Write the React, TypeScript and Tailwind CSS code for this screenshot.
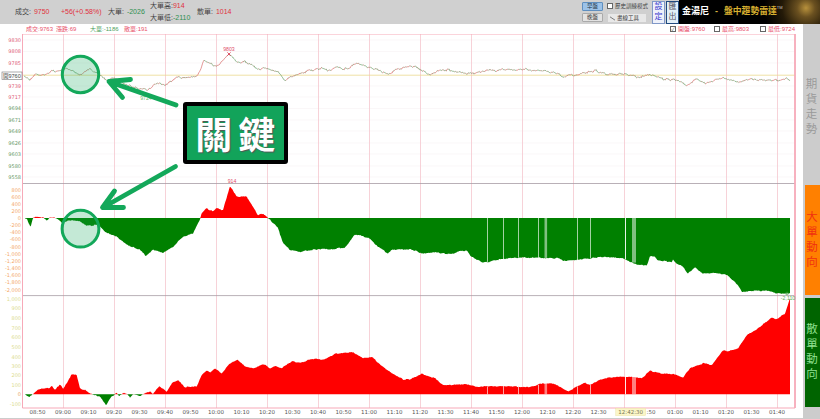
type Pt = [number, number];

const pricePts: Pt[] = [
  [24, 76], [30, 80], [35, 74], [40, 76], [45, 74], [52, 70.7], [60, 70.7], [65, 68.3], [72, 70.7], [80, 75], [90, 69], [95, 72.7],
  [102, 76.7], [107, 80], [113, 78], [133, 86.7], [147, 90], [157, 83], [165, 86], [177, 76.7], [187, 78], [197, 76.7], [200, 71.7],
  [203, 61], [208, 63], [217, 66.7], [222, 61.7], [229, 54], [237, 63], [245, 61.7], [260, 70], [263, 68], [278, 71.7], [285, 80],
  [300, 72.7], [315, 70], [320, 68], [328, 70.7], [337, 66.7], [347, 69.3], [357, 63.3], [368, 66.7], [380, 70], [388, 75], [395, 70],
  [410, 65.7], [418, 68], [428, 74], [433, 74], [440, 69.3], [453, 70.7], [472, 74], [482, 70.7], [500, 70], [522, 69.3], [543, 70.7],
  [557, 72.7], [563, 76.7], [580, 74], [597, 70.7], [607, 74.7], [627, 74], [638, 77], [653, 74.7], [663, 79], [677, 80], [687, 85.7],
  [697, 79], [705, 83], [722, 78], [740, 82], [752, 79], [775, 80.7], [787, 78], [790, 82],
];

const bigPts: Pt[] = [
  [25, 218], [27, 219], [30.7, 227], [33, 218], [36.7, 216.7], [43, 217.5], [46.7, 220.7], [50, 218], [55, 218], [61.7, 222.3], [71.7, 220],
  [80, 221.7], [86.7, 226], [98, 225], [106.7, 233], [116.7, 236.7], [126.7, 245], [140, 250], [145.7, 256], [153, 250], [163, 253],
  [173, 246.7], [183, 236.7], [193, 233], [200, 220], [201.7, 213], [206.7, 208.3], [213, 211.7], [216.7, 208], [223, 210], [230, 186],
  [233, 190], [236.7, 196.7], [246.7, 196.7], [253, 206.7], [258, 215], [263, 213.3], [267, 217.3], [270, 219.3], [278, 228.3], [283, 243],
  [290, 250], [300, 251.7], [318, 249], [333, 249], [345, 247.3], [355, 234.3], [370, 238.3], [378, 246.7], [388, 253.3], [392, 250],
  [410, 249], [422, 253.3], [437, 252.3], [450, 254], [467, 250], [471, 256.7], [483, 262.7], [500, 259.3], [520, 257.3], [560, 258.3],
  [563, 261], [583, 259.3], [597, 257.3], [600, 256.7], [623, 258.3], [637, 265], [647, 265], [650, 256], [655, 256.7], [658, 260.7],
  [672, 261.7], [673, 259.3], [677, 264], [683, 266.7], [688, 274], [695, 266.7], [703, 274], [713, 272.7], [727, 275], [738, 285],
  [742, 292.3], [757, 290.7], [767, 290.7], [777, 293.3], [790, 293.3],
];

const smallPts: Pt[] = [
  [25, 394], [29.3, 397.3], [33, 394], [38, 389.3], [45, 388], [50, 388.5], [51.7, 385.7], [55, 390], [60, 384], [63, 389.3], [66.7, 383.3],
  [71.7, 374], [76.7, 375], [80, 388.3], [85, 390], [90, 393.3], [93, 395], [100, 396.7], [106, 405], [111.7, 396], [115, 394.3], [116.7, 392.7],
  [119, 396], [123, 392.7], [126.7, 394.3], [130, 397.3], [133, 394.3], [140, 396], [143, 394.3], [150, 391], [153, 394], [159.3, 386],
  [166.7, 391.7], [171.7, 383.3], [178.3, 380], [185, 387.3], [196.7, 386], [201.7, 375], [206.7, 370], [210, 373], [215, 368.3], [221.7, 373.3],
  [228.3, 365], [237.3, 359.3], [245, 366.7], [253.3, 368.3], [263.3, 364], [270, 368.3], [275, 365.7], [281.7, 368.3], [291.7, 361], [300, 362.7],
  [315, 358.3], [323, 360], [336.7, 353.3], [353, 352.3], [363, 358.3], [371.7, 356.7], [386.7, 370], [403, 379.3], [410, 379.3], [421.7, 374],
  [435, 378.3], [443, 385], [466.7, 384.3], [476.7, 386.7], [500, 386], [523, 386.7], [530, 387.3], [543, 383.3], [551.7, 383.3], [560, 386.7],
  [568.3, 391.7], [576.7, 386.7], [585, 382.7], [590, 385], [600, 380], [610, 377.3], [633, 376.7], [641.7, 378.3], [650, 370.7], [660, 373.3],
  [673, 374], [683, 377.3], [690, 368.3], [703, 363.3], [711.7, 365], [723, 350], [727, 351.5], [738, 348.3], [746.7, 335], [756.7, 329.3],
  [771.7, 317.3], [776.7, 319], [785, 313.3], [790, 298.3],
];

const slits: [number, number, number][] = [
  [487, 0.8, 0.8], [503, 0.8, 0.8], [518, 0.8, 0.8], [538, 0.8, 0.8], [544.5, 2.6, 0.5], [577, 0.8, 0.8], [590, 0.8, 0.8], [625, 1, 0.9], [632, 4, 0.5],
];

const priceAxis: [string, number, string][] = [
  ["9830", 40, "#e0607a"], ["9808", 51.5, "#e0607a"], ["9785", 63, "#e0607a"], ["9739", 86, "#e0607a"], ["9717", 97, "#e0607a"],
  ["9694", 108.5, "#6a9a6a"], ["9671", 120, "#6a9a6a"], ["9649", 131, "#6a9a6a"], ["9626", 143, "#6a9a6a"], ["9603", 154, "#6a9a6a"],
  ["9580", 166, "#6a9a6a"], ["9558", 177, "#6a9a6a"],
];
const bigAxis: [string, number][] = [
  ["800", 190], ["600", 197], ["400", 204], ["200", 211], ["0", 218], ["-200", 225], ["-400", 232], ["-600", 239.5], ["-800", 246.7],
  ["-1,000", 254], ["-1,200", 261], ["-1,400", 268.3], ["-1,600", 275.3], ["-1,800", 282.3], ["-2,000", 289.7],
];
const smallAxis: [string, number][] = [
  ["1,000", 299], ["900", 308.3], ["800", 318.3], ["700", 327.7], ["600", 337.3], ["500", 346.7], ["400", 356.7], ["300", 366], ["200", 375.3],
  ["100", 385], ["0", 394.3], ["-100", 404],
];
const timeLabels = [
  "08:50", "09:00", "09:10", "09:20", "09:30", "09:40", "09:50", "10:00", "10:10", "10:20", "10:30", "10:40", "10:50", "11:00", "11:10", "11:20",
  "11:30", "11:40", "11:50", "12:00", "12:10", "12:20", "12:30", "", "", "01:00", "01:10", "01:20", "01:30", "01:40",
];
const gridX = [63.5, 114.5, 165.5, 216.5, 267.5, 318.5, 369.5, 420.5, 471.5, 522.5, 573.5, 624.5, 675.5, 726.5, 777.5];

function lerpAt(pts: Pt[], x: number) {
  for (let i = 1; i < pts.length; i++) {
    if (x <= pts[i][0]) {
      const [x0, y0] = pts[i - 1];
      const [x1, y1] = pts[i];
      return y0 + ((y1 - y0) * (x - x0)) / (x1 - x0);
    }
  }
  return pts[pts.length - 1][1];
}

// fake tick wobble so the lines aren't straight between traced points
function noise(i: number) {
  const n = Math.sin(i * 12.9898) * 43758.5453;
  return n - Math.floor(n) - 0.5;
}

function sample(pts: Pt[], amp: number, seed: number): Pt[] {
  const out: Pt[] = [];
  const end = pts[pts.length - 1][0];
  let i = 0;
  for (let x = pts[0][0]; x <= end; x += 0.75) {
    const slow = noise(seed + Math.floor(i / 4)) * amp * 1.6;
    out.push([x, lerpAt(pts, x) + noise(i + seed) * amp + slow]);
    i++;
  }
  return out;
}

function area(pts: Pt[], zero: number, above: boolean) {
  const body = pts.map(([x, y]) => `L${x.toFixed(2)} ${(above ? Math.min(y, zero) : Math.max(y, zero)).toFixed(2)}`).join("");
  return `M${pts[0][0]} ${zero}${body}L${pts[pts.length - 1][0]} ${zero}Z`;
}

function Chart() {
  const price = sample(pricePts, 1.1, 3);
  const big = sample(bigPts, 0.6, 40);
  const small = sample(smallPts, 0.5, 90);
  let up = "";
  let down = "";
  price.forEach((p, i) => {
    if (i === 0) return;
    const q = price[i - 1];
    const seg = `M${q[0].toFixed(2)} ${q[1].toFixed(2)}L${p[0].toFixed(2)} ${p[1].toFixed(2)}`;
    if (p[1] < q[1]) up += seg;
    else down += seg;
  });

  return (
    <svg viewBox="0 34 803 384" className="block h-[384px] w-[803px]">
      {[40, 51.5, 63, 86, 97, 108.5, 120, 131, 143, 154, 166, 177].map((y) => (
        <line key={y} x1="23" x2="795" y1={y} y2={y} stroke="#f6f2f3" strokeWidth="0.6" />
      ))}
      {gridX.map((x) => (
        <line key={x} x1={x} x2={x} y1="34" y2="408" stroke="#f5c6ce" strokeWidth="0.8" />
      ))}
      <line x1="23" x2="795" y1="75.2" y2="75.2" stroke="#ecd98e" strokeWidth="0.8" />
      <path d={up} stroke="#d0504f" strokeWidth="0.6" fill="none" />
      <path d={down} stroke="#4f8f4f" strokeWidth="0.6" fill="none" />

      <path d={area(big, 218, false)} fill="#008000" />
      <path d={area(big, 218, true)} fill="#ff0000" />
      <path d={area(small, 394.3, true)} fill="#ff0000" />
      <path d={area(small, 394.3, false)} fill="#008000" />
      {slits.map(([x, w, o]) => (
        <g key={x} fill="#ffffff" opacity={o}>
          <rect x={x} y="218" width={w} height={lerpAt(bigPts, x) - 218} />
          <rect x={x} y={lerpAt(smallPts, x)} width={w} height={394.3 - lerpAt(smallPts, x)} />
        </g>
      ))}

      <line x1="23" x2="795" y1="183.5" y2="183.5" stroke="#a79ca4" strokeWidth="0.8" />
      <line x1="23" x2="795" y1="295.6" y2="295.6" stroke="#a79ca4" strokeWidth="0.8" />
      <path d="M22.5 34H795V408H22.5Z" fill="none" stroke="#f7a9b8" strokeWidth="1" />
      <line x1="795" x2="795" y1="34" y2="408" stroke="#f7a9b8" strokeWidth="1.6" />

      <g className="font-['DejaVu_Sans',sans-serif] text-[5px]" textAnchor="end">
        {priceAxis.map(([t, y, c]) => (
          <text key={t} x="21" y={y + 1.8} fill={c}>{t}</text>
        ))}
        {bigAxis.map(([t, y]) => (
          <text key={t} x="21" y={y + 1.8} fill="#f4a868">{t}</text>
        ))}
        {smallAxis.map(([t, y]) => (
          <text key={t} x="21" y={y + 1.8} fill={t === "0" ? "#e8a060" : "#dcdc90"}>{t}</text>
        ))}
      </g>
      <rect x="2" y="72" width="20" height="7.5" fill="#ffffff" stroke="#777777" strokeWidth="0.6" />
      <text x="3" y="78" fontSize="5.5" fill="#444444">開9760</text>

      <g className="font-['DejaVu_Sans',sans-serif] text-[5.5px]" fill="#555555" textAnchor="middle">
        {timeLabels.map((t, i) => (
          <text key={i} x={37.5 + 25.5 * i} y="413.5">{t}</text>
        ))}
        <text x="651" y="413.5">:50</text>
      </g>
      <rect x="615.7" y="408.3" width="30" height="7.4" fill="#fbf6c8" stroke="#e8e0a0" strokeWidth="0.4" />
      <text x="630.7" y="413.5" fontSize="5.5" fill="#777755" textAnchor="middle" className="font-['DejaVu_Sans',sans-serif]">12:42:30</text>

      <g textAnchor="middle" fontSize="5.2">
        <text x="229" y="51" fill="#e0506a">9803</text>
        <path d="M227.4 52.4l3.2 3.2M230.6 52.4l-3.2 3.2" stroke="#d8304a" strokeWidth="0.8" />
        <text x="232" y="183" fill="#e0506a">914</text>
        <text x="146" y="100" fill="#6aba6a">9724</text>
        <text x="788" y="299.5" fill="#5ab05a">-2,110</text>
        <circle cx="787" cy="293.5" r="1.4" fill="none" stroke="#40a040" strokeWidth="0.6" />
      </g>

      {/* markup drawn on top of the screenshot */}
      <g stroke="#13a85a" fill="none" strokeLinecap="round" strokeLinejoin="round">
        <circle cx="80.5" cy="74.5" r="18.2" fill="#13a85a" fillOpacity="0.25" strokeWidth="3" />
        <circle cx="80.5" cy="228.7" r="18.4" fill="#13a85a" fillOpacity="0.25" strokeWidth="3" />
        <path d="M176 105L110 82M130.5 79.5L109 81.5L122.5 97.5" strokeWidth="4.8" />
        <path d="M175.5 166.5L103 207.5M114.5 191L102.5 207.5L123.5 207.5" strokeWidth="4.8" />
      </g>
    </svg>
  );
}

function Check({ checked }: { checked?: boolean }) {
  return (
    <span className="flex h-[6px] w-[6px] shrink-0 items-center justify-center border-[0.6px] border-[#666] bg-white text-[5px] leading-none text-[#555]">
      {checked ? "✓" : ""}
    </span>
  );
}

function Header() {
  return (
    <div className="flex h-[24px] items-center bg-[#d0d0d0] pl-[15px] text-[7px] text-[#444]">
      <div className="w-[46px]">成交: <span className="ml-[1px] text-[#e03040]">9750</span></div>
      <div className="w-[47px] text-[#e03040]">+56(+0.58%)</div>
      <div className="w-[42px]">大單: <span className="ml-[1px] text-[#2f8f4f]">-2026</span></div>
      <div className="flex w-[47px] flex-col gap-[2px]">
        <div>大單高:<span className="text-[#e03040]">914</span></div>
        <div>大單低:<span className="text-[#2f8f4f]">-2110</span></div>
      </div>
      <div>散單: <span className="ml-[1px] text-[#e03040]">1014</span></div>

      <div className="ml-auto flex h-full items-center">
        <div className="flex w-[21px] flex-col gap-[2.5px] text-[5.5px]">
          <button className="flex h-[8.5px] items-center justify-center rounded-[1px] border-[0.6px] border-[#5f8fc0] bg-[#9cc2e8] text-[#234]">早盤</button>
          <button className="flex h-[8.5px] items-center justify-center rounded-[1px] border-[0.6px] border-[#aaa] bg-[#e2e2e2] text-[#333]">晚盤</button>
        </div>
        <div className="ml-[3px] flex w-[44px] flex-col gap-[4px] text-[5.5px]">
          <div className="flex items-center gap-[2px] pl-[1px]">
            <Check />
            <span className="whitespace-nowrap">歷史訓練模式</span>
          </div>
          <div className="ml-[2px] flex h-[7.5px] w-[38px] items-center gap-[1px] bg-[#e8e8e8] pl-[1px] text-[#333]">
            <svg viewBox="0 0 8 6" className="h-[5px] w-[7px]">
              <path d="M1 1L7 5" stroke="#444" strokeWidth="0.8" />
            </svg>
            畫線工具
          </div>
        </div>
        <div className="ml-[2px] flex h-[23px] w-[13px] flex-col items-center justify-center border-[0.6px] border-[#8098c8] bg-[#eef1fa] text-[8px] leading-[10px] text-[#3a3ad0]">
          <span>設</span>
          <span>定</span>
        </div>
        <div className="ml-[1px] flex h-[23px] w-[13px] flex-col items-center justify-center border-[0.6px] border-[#204a80] bg-[#e2eff8] text-[8px] leading-[10px] text-[#556]">
          <span>匯</span>
          <span>出</span>
        </div>
        <div className="relative flex h-full w-[141px] items-center bg-black bg-[radial-gradient(circle_at_127px_8px,#b8913c_0,#6a5020_9px,#241a08_24px,#000000_42px)] pl-[3px] font-bold">
          <span className="text-[9px] text-white">金湯尼</span>
          <span className="ml-[6px] text-[9px] text-[#d8b040]">-</span>
          <span className="ml-[6px] text-[8.8px] text-[#d8b030]">盤中趨勢雷達</span>
          <span className="mt-[-8px] text-[4px] font-normal text-[#c8c8c8]">TM</span>
        </div>
      </div>
    </div>
  );
}

function Legend() {
  return (
    <div className="flex h-[10px] items-center text-[6px] whitespace-nowrap text-[#e8506a]">
      <span className="ml-[26px] w-[30px]">成交:9763</span>
      <span className="w-[34px]">漲跌:69</span>
      <span className="w-[34px] text-[#4f9f5f]">大單:-1186</span>
      <span>散單:191</span>
      <div className="ml-auto flex w-[125px] items-center">
        <span className="flex w-[44px] items-center">
          <Check checked />
          <span className="ml-[2px]">開盤:9760</span>
        </span>
        <span className="flex w-[46px] items-center">
          <Check />
          <span className="ml-[2px]">最高:9803</span>
        </span>
        <span className="flex items-center">
          <Check />
          <span className="ml-[2px]">最低:9724</span>
        </span>
      </div>
      <div className="w-[8px]" />
    </div>
  );
}

function SideText({ chars, className }: { chars: string; className: string }) {
  return (
    <div className={`flex flex-col items-center text-[11.5px] leading-[15px] ${className}`}>
      {chars.split("").map((c) => (
        <span key={c}>{c}</span>
      ))}
    </div>
  );
}

export default function App() {
  return (
    <div className="h-[419px] w-[820px] overflow-hidden bg-white font-['Liberation_Sans','Noto_Sans_CJK_TC',sans-serif]">
      <Header />
      <div className="flex h-[395px]">
        <div className="relative h-[395px] w-[803px] shrink-0 border-b border-[#cccccc]">
          <Legend />
          <Chart />
          <div className="absolute left-[183px] top-[78px] flex h-[62px] w-[104.5px] items-center justify-center gap-[6px] rounded-[3px] border-[4.5px] border-black bg-[#12a35a] text-[37px] font-bold leading-none text-white [text-shadow:1px_1px_1px_#555] font-['Noto_Sans_CJK_TC',sans-serif]">
            <span>關</span>
            <span>鍵</span>
          </div>
        </div>
        <div className="flex flex-1 flex-col bg-[#cccccc] pb-[11px]">
          <SideText chars="期貨走勢" className="h-[161px] pt-[53px] text-[#9a9a9a]" />
          <SideText chars="大單動向" className="ml-[1.5px] h-[110px] w-[15px] justify-center bg-[#ff8000] text-[#f03010]" />
          <SideText chars="散單動向" className="ml-[1.5px] mt-[2.5px] h-[109px] w-[15px] justify-center bg-[#006400] text-[#90e090]" />
        </div>
      </div>
    </div>
  );
}
